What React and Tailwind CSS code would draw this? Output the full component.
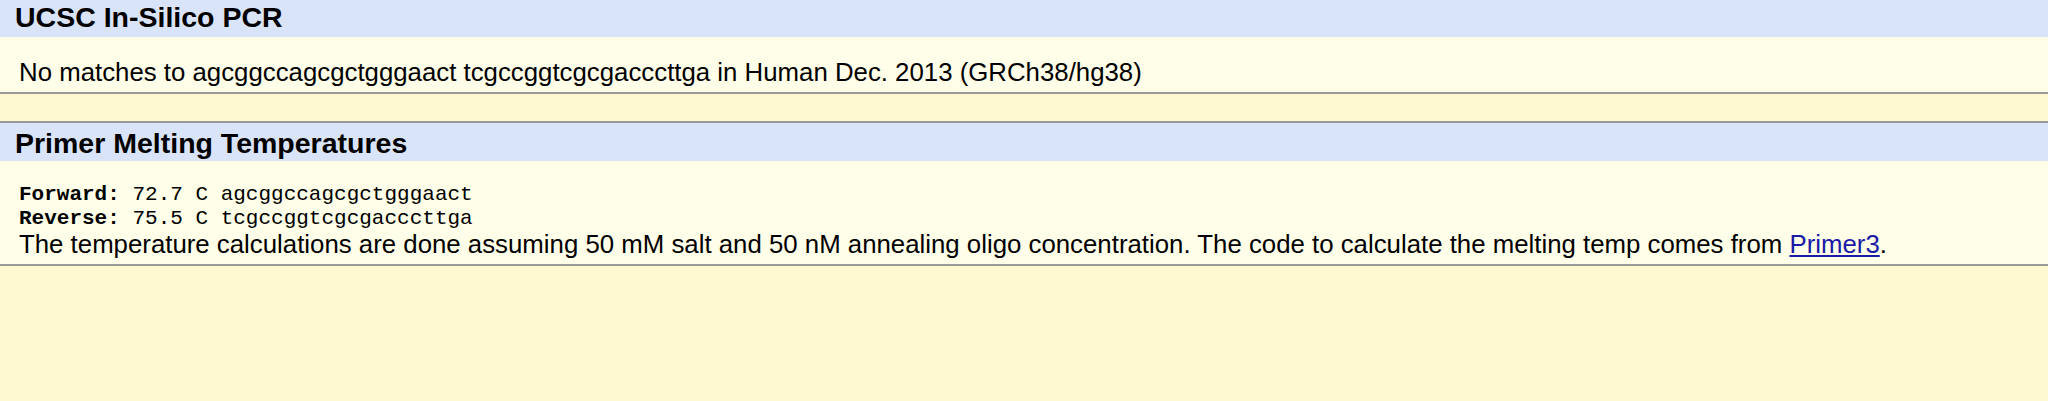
import React from "react";

const sans = "font-['Liberation_Sans',Arial,sans-serif]";
const mono = "font-['Liberation_Mono','Courier_New',monospace]";

const SectionHeader = ({ title, className = "" }) => (
  <div
    className={`bg-[#d9e4f8] pl-[15px] text-[28.5px] font-bold text-black whitespace-nowrap ${className}`}
  >
    {title}
  </div>
);

export default function App() {
  return (
    <div className={`min-h-[401px] w-full bg-[#fff9d2] ${sans}`}>
      {/* In-Silico PCR result */}
      <div className="border-b-2 border-[#999999]">
        <SectionHeader title="UCSC In-Silico PCR" className="h-[37px] leading-[34px]" />
        <div className="h-[55px] bg-[#fffee8] pl-[19px] pt-[20px] text-[25.8px] leading-[30px] text-black whitespace-nowrap">
          No matches to agcggccagcgctgggaact tcgccggtcgcgacccttga in Human Dec. 2013 (GRCh38/hg38)
        </div>
      </div>

      {/* Melting temps */}
      <div className="mt-[27px] border-y-2 border-[#999999]">
        <SectionHeader title="Primer Melting Temperatures" className="h-[38px] leading-[40px]" />
        <div className="h-[103px] bg-[#fffee8] pl-[19px] pt-[22px] text-black">
          <pre className={`${mono} text-[21px] leading-[24px]`}>
            <b>Forward:</b> 72.7 C agcggccagcgctgggaact
            {"\n"}
            <b>Reverse:</b> 75.5 C tcgccggtcgcgacccttga
          </pre>
          <div className="text-[25.8px] leading-[27px] whitespace-nowrap">
            The temperature calculations are done assuming 50 mM salt and 50 nM annealing oligo
            concentration. The code to calculate the melting temp comes from{" "}
            <a href="#" className="text-[#1a1aa6] underline">
              Primer3
            </a>
            .
          </div>
        </div>
      </div>
    </div>
  );
}
